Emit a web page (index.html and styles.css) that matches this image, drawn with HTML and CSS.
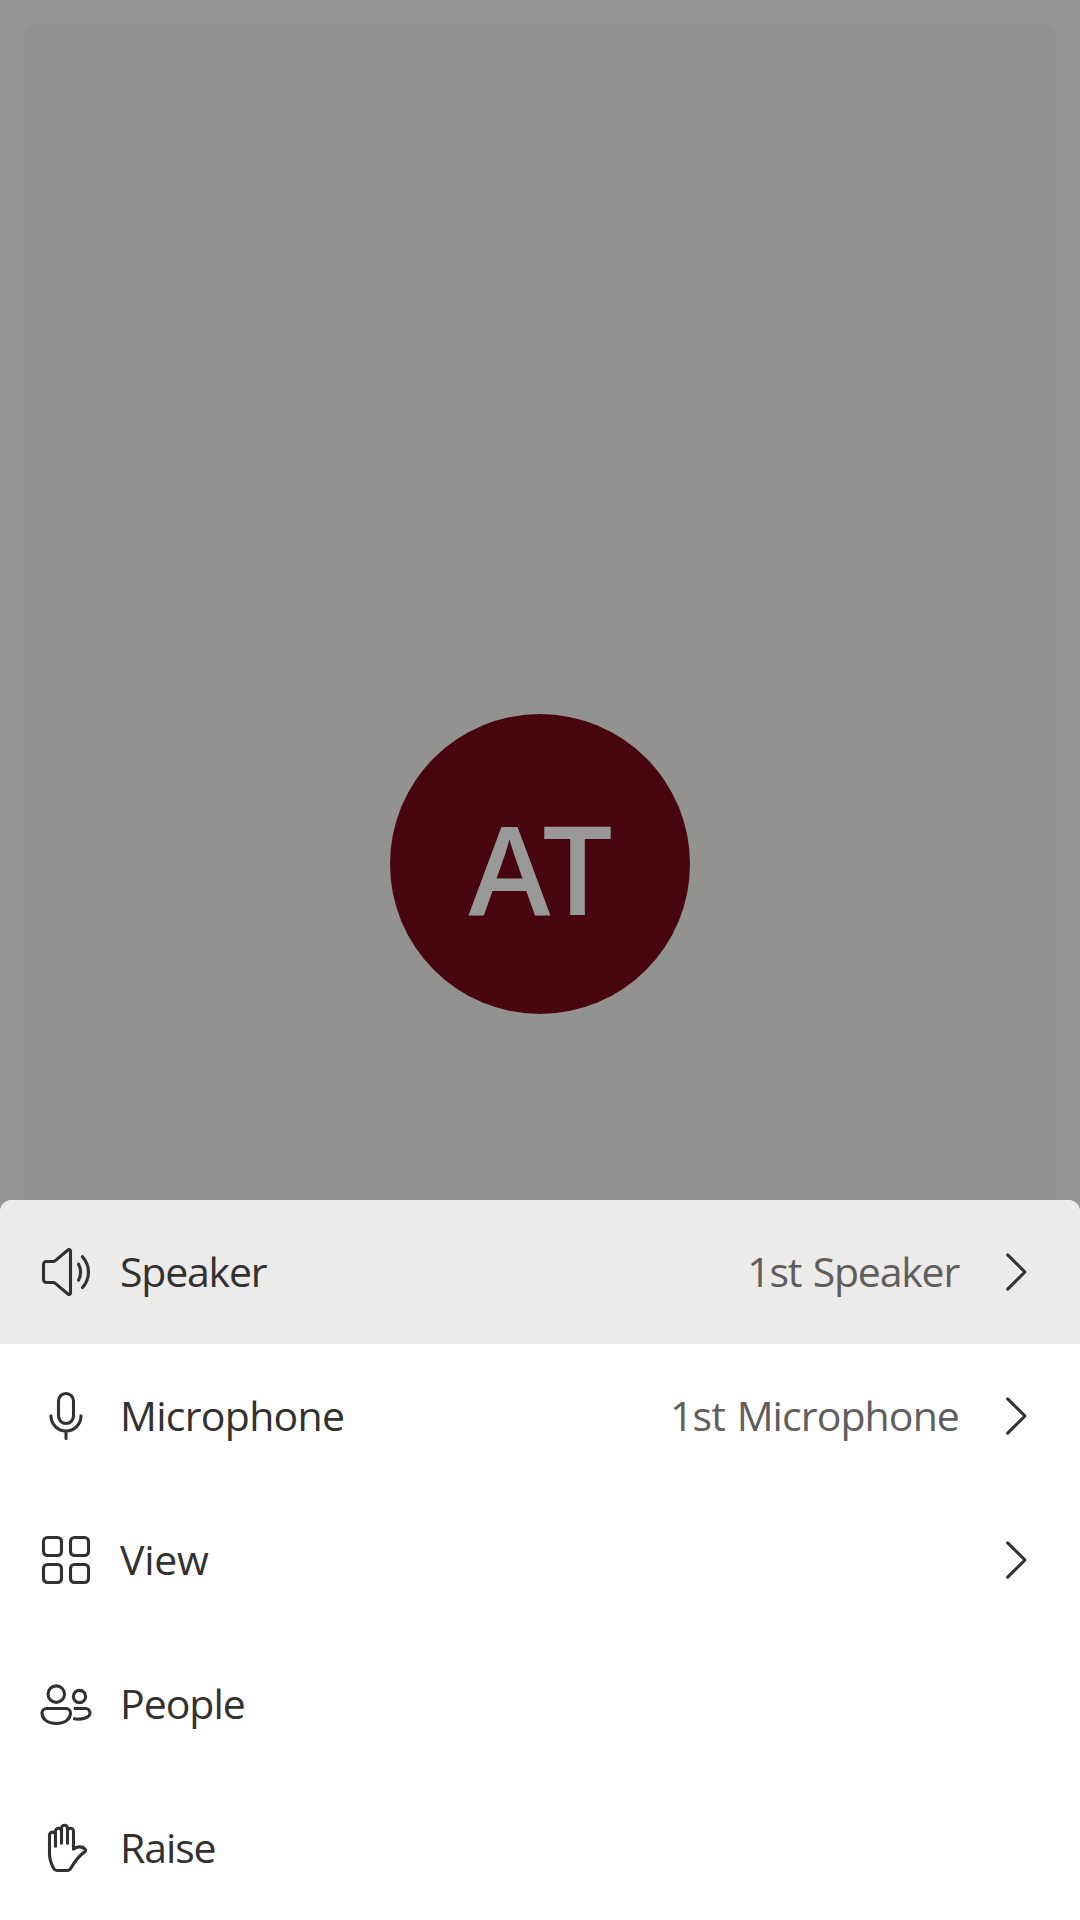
FILE: index.html
```
<!DOCTYPE html>
<html lang="en">
<head>
<meta charset="utf-8">
<title>Call options</title>
<link rel="stylesheet" href="styles.css">
</head>
<body>
<main class="call">
  <section class="tile">
    <div class="avatar"><span class="initials">AT</span></div>
  </section>
</main>
<nav class="drawer">
  <button class="row row-active">
    <svg class="icon" viewBox="0 0 20 20"><path d="M3.5 6.5h2.3a.8.8 0 0 0 .53-.2l4.32-3.65c.33-.28.85-.05.85.38v13.94c0 .43-.52.66-.85.38L6.33 13.7a.8.8 0 0 0-.53-.2H3.5a1 1 0 0 1-1-1v-5a1 1 0 0 1 1-1zM14.2 7.4q1.3 2.65 0 5.3M15.5 4.9c2.65 3.1 2.65 7.2 0 10.3"/></svg>
    <span class="label label-speaker">Speaker</span>
    <span class="value value-speaker">1st Speaker</span>
    <svg class="icon" viewBox="0 0 20 20"><path d="M7.9 4.3 13.65 10 7.9 15.7"/></svg>
  </button>
  <button class="row">
    <svg class="icon" viewBox="0 0 20 20"><rect x="7.5" y="2.5" width="5" height="10" rx="2.5"/><path d="M5 9.9v.1a5 5 0 0 0 10 0v-.1M10 15v2.5"/></svg>
    <span class="label label-microphone">Microphone</span>
    <span class="value value-microphone">1st Microphone</span>
    <svg class="icon" viewBox="0 0 20 20"><path d="M7.9 4.3 13.65 10 7.9 15.7"/></svg>
  </button>
  <button class="row">
    <svg class="icon" viewBox="0 0 20 20"><rect x="2.5" y="2.5" width="6" height="6" rx="1.3"/><rect x="11.5" y="2.5" width="6" height="6" rx="1.3"/><rect x="2.5" y="11.5" width="6" height="6" rx="1.3"/><rect x="11.5" y="11.5" width="6" height="6" rx="1.3"/></svg>
    <span class="label label-view">View</span>
    <svg class="icon" viewBox="0 0 20 20"><path d="M7.9 4.3 13.65 10 7.9 15.7"/></svg>
  </button>
  <button class="row">
    <svg class="icon" viewBox="0 0 20 20"><circle cx="6.75" cy="6.7" r="2.75"/><circle cx="14.5" cy="7.5" r="2.05"/><path d="M3.5 11.5H10a1.5 1.5 0 0 1 1.5 1.5c0 1.9-1.7 3.5-4.75 3.5S2 14.9 2 13a1.5 1.5 0 0 1 1.5-1.5z"/><path class="butt" d="M12.6 11.5h3.9A1.5 1.5 0 0 1 18 13c0 .9-1 2.05-3.5 2.05-.8 0-1.5-.08-2.1-.25"/></svg>
    <span class="label label-people">People</span>
  </button>
  <button class="row">
    <svg class="icon" viewBox="0 0 20 20"><path d="M6.5 9.4V5.7a1 1 0 0 0-2 0V12c0 2 .7 3.5 1.4 4.8.25.45.6.7 1.1.7h3.4c.5 0 .8-.2 1.1-.6 1.3-2.2 2.6-4.2 4.7-5.6.4-.3.4-.7.1-1-1-1-2.8-.8-3.8.1V4.4a1 1 0 0 0-2 0v4V3.4a1 1 0 0 0-2 0v5V4.4a1 1 0 0 0-2 0v1.5"/></svg>
    <span class="label label-raise">Raise</span>
  </button>
</nav>
</body>
</html>
```

FILE: styles.css
```
* { box-sizing: border-box; }

body {
  margin: 0;
  width: 1080px;
  height: 1920px;
  overflow: hidden;
  position: relative;
  font-family: "Open Sans", "Noto Sans", sans-serif;
  background: #969694;
}

.call {
  height: 1728px;
  padding: 24px;
  display: flex;
}

.tile {
  flex: 1;
  display: flex;
  align-items: center;
  justify-content: center;
  border-radius: 12px;
  background: #929290;
}

.avatar {
  width: 300px;
  height: 300px;
  display: flex;
  align-items: center;
  justify-content: center;
  border-radius: 50%;
  background: #47060f;
}

.initials {
  margin-left: -7px;
  padding-top: 5px;
  font-size: 124px;
  line-height: 168px;
  font-weight: 600;
  letter-spacing: -8px;
  color: #999;
}

/* Sheet that slides over the call */
.drawer {
  position: absolute;
  left: 0;
  right: 0;
  bottom: 0;
  display: flex;
  flex-direction: column;
  overflow: hidden;
  border-radius: 12px 12px 0 0;
  background: #fff;
}

.row {
  height: 144px;
  padding: 0 36px;
  display: flex;
  align-items: center;
  gap: 24px;
  border: 0;
  background: none;
  font: inherit;
  font-size: 41px;
  line-height: 60px;
  color: #323130;
  text-align: left;
  white-space: nowrap;
}

.row-active { background: #ecebe9; }

.icon {
  width: 60px;
  height: 60px;
  flex: none;
  fill: none;
  stroke: #323130;
  stroke-width: 1.03;
  stroke-linecap: round;
  stroke-linejoin: round;
}

.butt { stroke-linecap: butt; }

.label {
  flex: 1;
  padding-bottom: 2px;
}

.value {
  color: #605e5c;
  padding: 0 1px 2px 0;
  word-spacing: 2px;
}

.label-speaker { letter-spacing: -1.2px; }
.label-microphone { letter-spacing: -0.7px; }
.label-view { letter-spacing: -0.3px; }
.label-people { letter-spacing: -1px; }
.label-raise { letter-spacing: -1.1px; }
.value-speaker { letter-spacing: -1.2px; }
.value-microphone { letter-spacing: -0.9px; }
```
